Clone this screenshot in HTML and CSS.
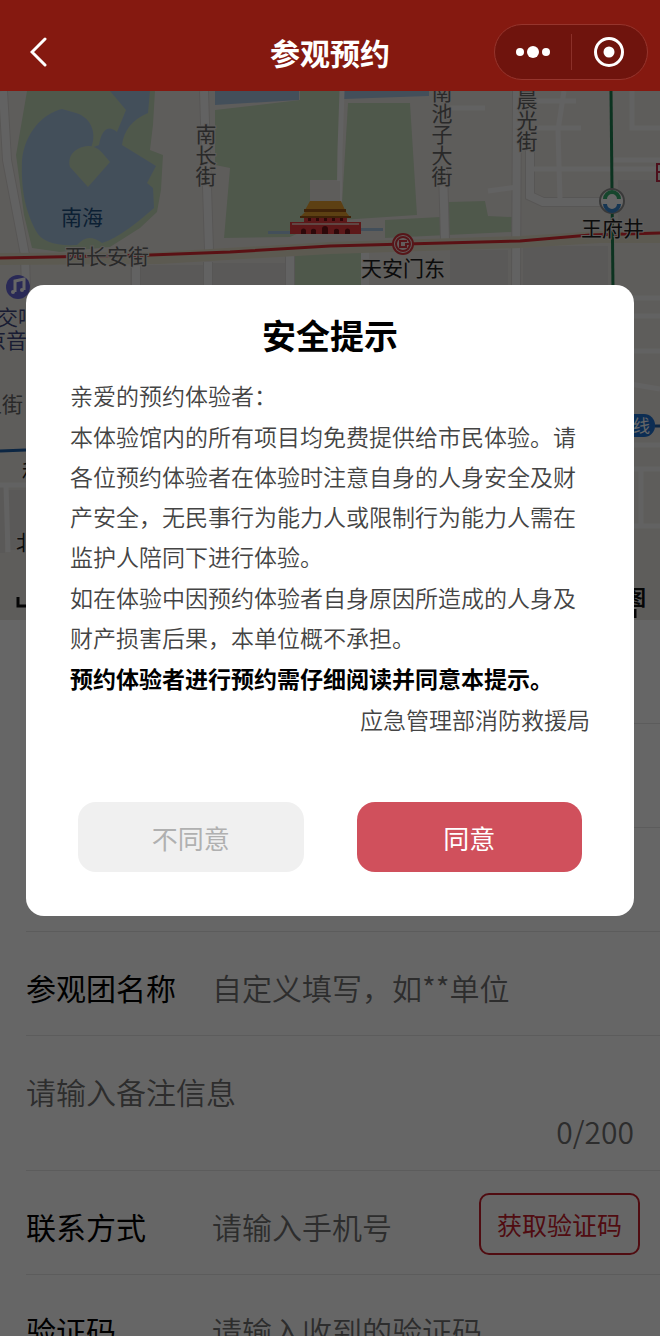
FILE: index.html
```html
<!DOCTYPE html>
<html lang="zh-CN">
  <head>
    <meta charset="UTF-8" />
    <meta name="viewport" content="width=device-width, initial-scale=1" />
    <title>参观预约</title>
    <link rel="stylesheet" href="styles.css">
  </head>
  <body>
    <header class="navbar">
      <button class="back" type="button" aria-label="返回">
        <svg width="18" height="30" viewBox="0 0 18 30"><path d="M15 2 L2 15 L15 28" /></svg>
      </button>
      <h1>参观预约</h1>
      <div class="capsule">
        <button type="button" aria-label="更多">
          <svg width="36" height="16" viewBox="0 0 36 16">
            <circle cx="5" cy="8" r="4" /><circle cx="18" cy="8" r="6" /><circle cx="31" cy="8" r="4" />
          </svg>
        </button>
        <button type="button" aria-label="关闭">
          <svg width="32" height="32" viewBox="0 0 32 32">
            <circle class="ring" cx="16" cy="16" r="13.5" /><circle cx="16" cy="16" r="5.5" />
          </svg>
        </button>
      </div>
    </header>

    <main>
      <svg class="map" viewBox="0 91 660 529" preserveAspectRatio="xMidYMid slice">
        <rect class="ground" x="0" y="91" width="660" height="529" />

        <!-- parks and lakes -->
        <path class="park" d="M27 91 H155 L153 125 L150 150 L163 155 L161 190 L157 212 L140 228 L110 247 L60 252 L32 248 L24 215 L16 155 Z" />
        <path class="water" d="M62 109 C42 114 25 133 22 160 C21 190 25 210 36 231 C42 242 55 246 77 245 C85 236 92 236 102 243 C118 238 138 222 154 208 L153 188 L147 183 L156 166 L122 145 C124 130 132 120 148 113 L150 91 H110 L126 110 L117 132 C109 125 102 128 99 145 L91 148 C97 134 92 118 76 113 Z" />
        <path class="park" d="M88 187 L70 167 C67 155 76 147 88 146 C99 146 103 154 110 162 Z" />
        <path class="park" d="M215 110 L300 100 V91 H340 V180 H310 V228 L290 237 L224 238 L230 168 L215 165 Z" />
        <path class="water" d="M215 91 H299 V100 L215 105 Z" />
        <path class="park" d="M348 103 H410 L417 215 L341 220 Z" />
        <path class="water" d="M344 91 H429 V96 L344 99 Z" />
        <path class="park" d="M295 250 V290 H361 V250 Z M385 220 L440 217 L448 202 L485 201 L488 216 L512 217 V232 L385 238 Z" />
        <path class="water" d="M268 231 H292 V234 H268 Z M361 228 H383 V231 H361 Z" />
        <path class="block" d="M130 265 H203 V290 H130 Z M212 263 H285 V290 H212 Z M450 250 H508 V290 H450 Z M523 246 H608 V290 H523 Z" />
        <path class="block" d="M618 180 H660 V238 H618 Z M0 485 H5 V553 H0 Z M8 490 H26 V550 H8 Z" />

        <!-- streets -->
        <g class="road-edge">
          <path d="M3 91 L7 160 L25 255 L26 290 M204 91 L209 250 M208 262 V290 M136 262 V290 M290 255 V290" />
          <path d="M517 91 L516 290 M443 170 L445 240 M530 150 V196 L543 202 H600" />
        </g>
        <g class="road">
          <path d="M3 91 L7 160 L25 255 L26 290 M204 91 L209 250 M208 262 V290 M136 262 V290 M290 255 V290 M365 252 V290" />
          <path d="M517 91 L516 290 M443 170 L445 240 M530 150 V196 L543 202 H600" />
        </g>
        <g class="lane">
          <path d="M342 91 L340 150 L339 220 M450 108 H485 M488 191 L518 187 M564 91 L558 130 L560 200 M534 101 H576 M534 128 H581 M532 169 H660 M632 91 V128 H660 M614 160 H660" />
          <path d="M0 485 H26 M6 485 L8 552 M630 298 H660 M630 316 H660 M630 351 H660 M630 384 L660 389 M630 445 H660 M630 469 H660 M641 470 V526 M630 526 H660" />
        </g>
        <path class="verge" d="M0 259 L160 258 L330 248 L520 242 L600 237 H660" />
        <path class="metro-red" d="M0 258 L150 255 L230 252 L330 246 L520 241 L590 235 L660 233" />
        <path class="metro-green" d="M611 91 L613 290" />
        <path class="metro-blue" d="M0 451 L26 450 M655 426 H660" />

        <!-- gate tower -->
        <g class="tower">
          <path class="pale" d="M310 181 H340 V202 H310 Z" />
          <path class="gold" d="M310 201 H341 L345 210 H305 Z M305 212 H346 L350 217 H300 Z" />
          <path class="eave" d="M304 209 H346 V212 H304 Z M300 216 H351 V218 H300 Z" />
          <path class="wall" d="M304 218 H347 V222 H304 Z M290 222 H361 V234 H290 Z" />
          <path class="trim" d="M292 223 H359 V225 H292 Z" />
          <path class="arch" d="M301 234 V231 A2 2 0 0 1 306 231 V234 Z M311 234 V230 A3 3 0 0 1 316 230 V234 Z M322 234 V229 A3 3 0 0 1 328 229 V234 Z M334 234 V230 A3 3 0 0 1 339 230 V234 Z M345 234 V231 A2 2 0 0 1 350 231 V234 Z" />
          <path class="arch" d="M308 218 H311 V221 H308 Z M316 218 H319 V221 H316 Z M324 218 H327 V221 H324 Z M332 218 H335 V221 H332 Z M340 218 H343 V221 H340 Z" />
        </g>

        <!-- stations -->
        <g class="station-red">
          <circle cx="403" cy="244" r="10" />
          <circle cx="403" cy="244" r="7" />
          <path d="M407 241 H400 V247 H406 V244 H410" />
        </g>
        <g class="station-loop">
          <circle cx="612" cy="201" r="12" />
          <path class="up" d="M605 199 A7 7 0 0 1 619 199" />
          <path class="down" d="M605 204 A7 7 0 0 0 619 204" />
        </g>
        <g class="music">
          <circle cx="18" cy="287" r="12" />
          <path d="M15 292 V281 L24 279 V290" />
          <circle class="note" cx="13" cy="292" r="2" /><circle class="note" cx="22" cy="290" r="2" />
        </g>
        <rect class="line-tag" x="600" y="414" width="55" height="23" rx="11" />
        <path class="box-mark" d="M662 164 H657 V181 H662 M657 172 H662" />

        <g class="road-name">
          <text class="down-text" x="206" y="124">南长街</text>
          <text class="down-text" x="442" y="82">南池子大街</text>
          <text class="down-text" x="527" y="89">晨光街</text>
          <text x="65" y="264">西长安街</text>
          <text x="-19" y="412">上街</text>
        </g>
        <text class="lake-name" x="61" y="225">南海</text>
        <g class="place">
          <text x="361" y="276">天安门东</text>
          <text x="581" y="236">王府井</text>
          <text x="22" y="479">和</text>
          <text x="16" y="550">北</text>
        </g>
        <g class="hall">
          <text x="-3" y="325">交响</text>
          <text x="-15" y="348">京音</text>
        </g>
        <text class="line-name" x="633" y="432">线</text>
        <path class="scale" d="M18 597 V606 H40 M635 609 V618" />
        <text class="brand" x="625" y="605">图</text>
      </svg>

      <form class="booking">
        <div class="row"></div>
        <div class="row"></div>
        <div class="row"></div>
        <div class="row">
          <label for="group">参观团名称</label>
          <input id="group" type="text" placeholder="自定义填写，如**单位">
        </div>
        <div class="row remark">
          <textarea id="remark" rows="1" maxlength="200" aria-label="备注" placeholder="请输入备注信息"></textarea>
          <span class="count">0/200</span>
        </div>
        <div class="row">
          <label for="phone">联系方式</label>
          <input id="phone" type="tel" placeholder="请输入手机号">
          <button class="code" type="button">获取验证码</button>
        </div>
        <div class="row">
          <label for="code">验证码</label>
          <input id="code" type="text" placeholder="请输入收到的验证码">
        </div>
      </form>
    </main>

    <div class="mask">
      <section class="dialog" role="dialog" aria-modal="true" aria-labelledby="tip-title">
        <h2 id="tip-title">安全提示</h2>
        <div class="tip">
          <p>亲爱的预约体验者：</p>
          <p>本体验馆内的所有项目均免费提供给市民体验。请各位预约体验者在体验时注意自身的人身安全及财产安全，无民事行为能力人或限制行为能力人需在监护人陪同下进行体验。</p>
          <p>如在体验中因预约体验者自身原因所造成的人身及财产损害后果，本单位概不承担。</p>
          <p class="strong">预约体验者进行预约需仔细阅读并同意本提示。</p>
          <p class="sign">应急管理部消防救援局</p>
        </div>
        <div class="actions">
          <button class="refuse" type="button">不同意</button>
          <button class="agree" type="button">同意</button>
        </div>
      </section>
    </div>
  </body>
</html>
```
FILE: styles.css
```css
* {
  box-sizing: border-box;
}

body {
  margin: 0;
  height: 100vh;
  overflow: hidden;
  background: #fff;
  color: #000;
  font-family: "Noto Sans CJK SC", sans-serif;
}

button,
input,
textarea {
  margin: 0;
  padding: 0;
  border: 0;
  background: none;
  font-family: inherit;
}

/* top bar, stays above the mask */
.navbar {
  position: relative;
  z-index: 2;
  display: grid;
  grid-template-columns: 1fr auto 1fr;
  align-items: center;
  height: 91px;
  padding: 12px 12px 0 30px;
  background: #851910;
}

.navbar h1 {
  margin: 0;
  padding-right: 18px;
  color: #fff;
  font-size: 30px;
  font-weight: 700;
  line-height: 40px;
}

.navbar svg {
  display: block;
  fill: #fff;
}

.back {
  justify-self: start;
}

.back path,
.capsule .ring {
  fill: none;
  stroke: #fff;
  stroke-width: 3;
  stroke-linecap: round;
}

.capsule {
  justify-self: end;
  display: flex;
  align-items: center;
  width: 154px;
  height: 56px;
  border: 1px solid #96352d;
  border-radius: 28px;
  background: #6f140d;
}

.capsule button {
  flex: 1;
  display: flex;
  align-items: center;
  justify-content: center;
  height: 36px;
}

.capsule button + button {
  border-left: 1px solid #8b3029;
}

/* map */
.map {
  display: block;
  width: 100%;
  height: 529px;
  font-size: 21px;
}

.ground { fill: #ece8e4; }
.park { fill: #c6dbbc; }
.water { fill: #a9c5e2; }
.block { fill: #e2dfdc; }

.road-edge,
.road,
.lane,
.verge {
  fill: none;
}

.road-edge { stroke: #dad7d4; stroke-width: 10; }
.road { stroke: #f6f5f4; stroke-width: 8; }
.lane { stroke: #f6f5f4; stroke-width: 5; }
.verge { stroke: #e6e2ca; stroke-width: 12; }

.metro-red { fill: none; stroke: #e02c34; stroke-width: 3; }
.metro-green { fill: none; stroke: #208050; stroke-width: 3; }
.metro-blue { fill: none; stroke: #1e60a8; stroke-width: 3; }

.tower .pale { fill: #ece8e4; }
.tower .gold { fill: #e8a030; }
.tower .eave { fill: #a05818; }
.tower .wall { fill: #e83c40; }
.tower .trim { fill: #f0b0a8; }
.tower .arch { fill: #701418; }

.station-red circle,
.station-red path {
  fill: #f8e8e6;
  stroke: #d83840;
  stroke-width: 2;
}

.station-loop circle { fill: #fff; stroke: #909090; stroke-width: 2; }
.station-loop path { fill: none; stroke-width: 4; }
.station-loop .up { stroke: #38b070; }
.station-loop .down { stroke: #3888d0; }

.music circle { fill: #6868d8; }
.music path { fill: none; stroke: #fff; stroke-width: 3; }
.music .note { fill: #fff; }

.line-tag { fill: #1e70d0; }
.line-name { fill: #fff; font-size: 17px; }
.box-mark { fill: none; stroke: #c02848; stroke-width: 2; }

.road-name,
.place,
.hall {
  paint-order: stroke;
  stroke: #ece8e4;
  stroke-width: 2;
}

.down-text {
  writing-mode: vertical-rl;
}

.road-name { fill: #666; }
.place { fill: #202020; }
.hall { fill: #404880; }
.lake-name { fill: #205080; }

.scale { fill: none; stroke: #101010; stroke-width: 3; }
.brand { fill: #101010; font-weight: 700; }

/* form */
.booking {
  padding-left: 26px;
}

.row {
  display: flex;
  align-items: center;
  height: 104px;
  padding: 2px 20px 0 0;
  border-bottom: 1px solid #e6e6e6;
}

.row label,
.row input,
.row textarea,
.count {
  font-size: 30px;
  line-height: 44px;
}

.row label {
  flex: none;
  width: 186px;
  padding-top: 4px;
}

.row input {
  flex: 1;
  min-width: 0;
  height: 48px;
  padding-top: 4px;
}

.row ::placeholder {
  color: #707070;
  font-weight: 350;
  opacity: 1;
}

.row.remark {
  flex-direction: column;
  align-items: stretch;
  height: 135px;
  padding: 33px 26px 0 0;
}

.remark textarea {
  height: 44px;
  resize: none;
  overflow: hidden;
}

.count {
  align-self: flex-end;
  color: #707070;
  font-weight: 350;
  line-height: 36px;
}

.code {
  flex: none;
  width: 161px;
  height: 62px;
  border: 2px solid #c8202c;
  border-radius: 10px;
  color: #c8202c;
  font-size: 25px;
  line-height: 50px;
}

/* safety notice */
.mask {
  position: fixed;
  inset: 0;
  z-index: 1;
  padding: 285px 26px 0;
  background: rgba(0, 0, 0, 0.6);
}

.dialog {
  padding: 30px 44px 44px;
  border-radius: 18px;
  background: #fff;
}

.dialog h2 {
  margin: 0 0 20px;
  font-size: 34px;
  font-weight: 700;
  line-height: 40px;
  text-align: center;
}

.tip {
  display: flex;
  flex-direction: column;
  gap: 1px;
  color: #444;
  font-size: 23px;
  font-weight: 350;
  line-height: 40px;
}

.tip p {
  margin: 0;
}

.tip .strong {
  color: #000;
  font-weight: 700;
}

.tip .sign {
  text-align: right;
}

.actions {
  display: flex;
  gap: 53px;
  margin-top: 63px;
  padding: 0 8px;
}

.actions button {
  flex: 1;
  height: 70px;
  border-radius: 18px;
  font-size: 26px;
}

.refuse {
  background: #f0f0f0;
  color: #b0b0b0;
}

.agree {
  background: #d0505c;
  color: #fff;
}
```
